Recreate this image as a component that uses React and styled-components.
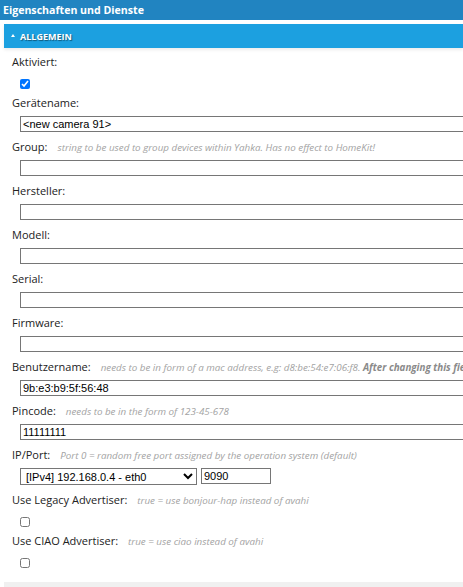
import React from "react";
import styled, { createGlobalStyle } from "styled-components";

const GlobalStyle = createGlobalStyle`
  html, body {
    margin: 0;
    padding: 0;
    background: #fff;
    overflow: hidden;
  }
  body {
    font-family: "Open Sans", "Liberation Sans", sans-serif;
  }
`;

const Page = styled.div`
  width: 463px;
  height: 587px;
  overflow: hidden;
  display: flex;
  flex-direction: column;
`;

const TitleBar = styled.div`
  height: 20px;
  background: #2184c1;
  color: #fff;
  font-weight: 700;
  font-size: 10.6px;
  line-height: 20px;
  padding-left: 3px;
  white-space: nowrap;
  flex-shrink: 0;
`;

const Section = styled.div`
  margin: 4px 0 0 4px;
  flex: 1;
  display: flex;
  flex-direction: column;
`;

const SectionHeader = styled.div`
  height: 24px;
  background: #1ca0e0;
  color: #fff;
  display: flex;
  align-items: center;
  gap: 5px;
  padding-left: 7px;
  font-size: 9px;
  font-weight: 700;
  text-transform: uppercase;
  text-shadow: 1px 1px 1px rgba(0, 0, 0, 0.45);
  box-shadow: 0 2px 3px rgba(0, 0, 0, 0.08);
  flex-shrink: 0;
`;

const Caret = styled.span`
  width: 0;
  height: 0;
  border-left: 2.5px solid transparent;
  border-right: 2.5px solid transparent;
  border-bottom: 3px solid #fff;
  margin-bottom: 1px;
`;

const Body = styled.div`
  padding: 6px 0 0 8px;
  flex: 1;
`;

const Field = styled.div`
  display: flex;
  flex-direction: column;
  margin-bottom: ${(p) => (p.$check ? "6px" : "7px")};
`;

const LabelRow = styled.div`
  height: 16px;
  line-height: 16px;
  display: flex;
  align-items: baseline;
  white-space: nowrap;
  font-size: 11px;
  color: #222;
`;

const Hint = styled.span`
  margin-left: 10px;
  font-size: 9.8px;
  font-style: italic;
  color: #a3a3a3;

  b {
    font-weight: 700;
    color: #8a8a8a;
  }
`;

const Control = styled.div`
  margin: ${(p) => (p.$check ? "9px 0 0 8px" : "5px 0 0 8px")};
  display: flex;
  gap: 4px;
`;

const TextInput = styled.input`
  box-sizing: border-box;
  height: 16px;
  width: ${(p) => p.$width || "600px"};
  flex-shrink: 0;
  border: 1px solid #767676;
  border-radius: 0;
  padding: 0 2px;
  font-family: "Liberation Sans", Arial, sans-serif;
  font-size: 11px;
  color: #000;
  outline: none;
`;

const Select = styled.select`
  box-sizing: border-box;
  height: 17px;
  width: 177px;
  border: 1px solid #767676;
  border-radius: 0;
  padding: 0 1px;
  font-family: "Liberation Sans", Arial, sans-serif;
  font-size: 11px;
  color: #000;
  background: #fff;
`;

const Check = styled.input`
  width: 10px;
  height: 10px;
  margin: 0;
  accent-color: #0075ff;
`;

const Footer = styled.div`
  height: 5px;
  background: #f0f0f0;
  flex-shrink: 0;
`;

const fields = [
  { label: "Gerätename:", value: "<new camera 91>" },
  { label: "Group:", hint: "string to be used to group devices within Yahka. Has no effect to HomeKit!" },
  { label: "Hersteller:" },
  { label: "Modell:" },
  { label: "Serial:" },
  { label: "Firmware:" },
  {
    label: "Benutzername:",
    hint: "needs to be in form of a mac address, e.g: d8:be:54:e7:06:f8.",
    bold: " After changing this field",
    value: "9b:e3:b9:5f:56:48",
  },
  { label: "Pincode:", hint: "needs to be in the form of 123-45-678", value: "11111111" },
];

const Label = ({ text, hint, bold }) => (
  <LabelRow>
    {text}
    {hint && (
      <Hint>
        {hint}
        {bold && <b>{bold}</b>}
      </Hint>
    )}
  </LabelRow>
);

export default function App() {
  return (
    <Page>
      <GlobalStyle />
      <TitleBar>Eigenschaften und Dienste</TitleBar>
      <Section>
        <SectionHeader>
          <Caret />
          Allgemein
        </SectionHeader>
        <Body>
          <Field $check>
            <Label text="Aktiviert:" />
            <Control $check>
              <Check type="checkbox" defaultChecked />
            </Control>
          </Field>

          {fields.map((f) => (
            <Field key={f.label}>
              <Label text={f.label} hint={f.hint} bold={f.bold} />
              <Control>
                <TextInput defaultValue={f.value || ""} />
              </Control>
            </Field>
          ))}

          <Field>
            <Label text="IP/Port:" hint="Port 0 = random free port assigned by the operation system (default)" />
            <Control>
              <Select defaultValue="eth0">
                <option value="eth0">[IPv4] 192.168.0.4 - eth0</option>
              </Select>
              <TextInput $width="70px" defaultValue="9090" />
            </Control>
          </Field>

          <Field $check>
            <Label text="Use Legacy Advertiser:" hint="true = use bonjour-hap instead of avahi" />
            <Control $check>
              <Check type="checkbox" />
            </Control>
          </Field>

          <Field $check>
            <Label text="Use CIAO Advertiser:" hint="true = use ciao instead of avahi" />
            <Control $check>
              <Check type="checkbox" />
            </Control>
          </Field>
        </Body>
        <Footer />
      </Section>
    </Page>
  );
}
